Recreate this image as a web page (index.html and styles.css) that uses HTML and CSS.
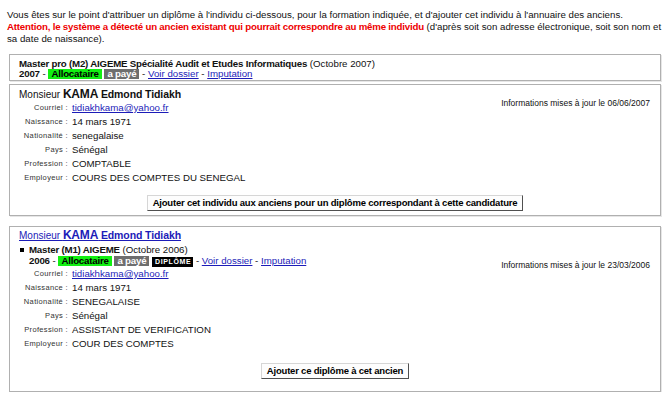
FILE: index.html
```html
<!DOCTYPE html>
<html lang="fr">
<head>
<meta charset="utf-8">
<link rel="stylesheet" href="styles.css">
</head>
<body>
<p class="intro">Vous êtes sur le point d'attribuer un diplôme à l'individu ci-dessous, pour la formation indiquée, et d'ajouter cet individu à l'annuaire des anciens.<br><strong class="warn">Attention, le système a détecté un ancien existant qui pourrait correspondre au même individu</strong> (d'après soit son adresse électronique, soit son nom et sa date de naissance).</p>

<div class="box head">
  <div class="title"><b>Master pro (M2) AIGEME Spécialité Audit et Etudes Informatiques</b> (Octobre 2007)</div>
  <div class="meta"><b>2007</b> - <span class="badge alloc">Allocataire</span> <span class="badge paye">a payé</span> - <a href="#">Voir dossier</a> - <a href="#">Imputation</a></div>
</div>

<div class="box person first">
  <div class="name">Monsieur <b class="big">KAMA</b> <b>Edmond Tidiakh</b></div>
  <div class="cols">
    <dl class="info">
      <dt>Courriel :</dt><dd><a href="#">tidiakhkama@yahoo.fr</a></dd>
      <dt>Naissance :</dt><dd>14 mars 1971</dd>
      <dt>Nationalité :</dt><dd>senegalaise</dd>
      <dt>Pays :</dt><dd>Sénégal</dd>
      <dt>Profession :</dt><dd>COMPTABLE</dd>
      <dt>Employeur :</dt><dd>COURS DES COMPTES DU SENEGAL</dd>
    </dl>
    <div class="upd">Informations mises à jour le 06/06/2007</div>
  </div>
  <div class="act"><button class="btn">Ajouter cet individu aux anciens pour un diplôme correspondant à cette candidature</button></div>
</div>

<div class="box person second">
  <div class="name"><a href="#" class="plink">Monsieur <b class="big">KAMA</b> <b>Edmond Tidiakh</b></a></div>
  <ul class="dips">
    <li><b>Master (M1) AIGEME</b> (Octobre 2006)
      <div class="meta"><b>2006</b> - <span class="badge alloc">Allocataire</span> <span class="badge paye">a payé</span> <span class="badge dip">DIPLÔME</span> - <a href="#">Voir dossier</a> - <a href="#">Imputation</a></div>
    </li>
  </ul>
  <div class="cols">
    <dl class="info">
      <dt>Courriel :</dt><dd><a href="#">tidiakhkama@yahoo.fr</a></dd>
      <dt>Naissance :</dt><dd>14 mars 1971</dd>
      <dt>Nationalité :</dt><dd>SENEGALAISE</dd>
      <dt>Pays :</dt><dd>Sénégal</dd>
      <dt>Profession :</dt><dd>ASSISTANT DE VERIFICATION</dd>
      <dt>Employeur :</dt><dd>COUR DES COMPTES</dd>
    </dl>
    <div class="upd">Informations mises à jour le 23/03/2006</div>
  </div>
  <div class="act"><button class="btn">Ajouter ce diplôme à cet ancien</button></div>
</div>
</body>
</html>
```
FILE: styles.css
```css
html, body { background: #fff; }
body {
  margin: 0;
  padding: 9px 0 0 7px;
  font-family: "Liberation Sans", Arial, sans-serif;
  font-size: 9.7px;
  color: #111;
}
a { color: #1c1cb8; text-decoration: underline; }
b, strong { font-weight: bold; letter-spacing: -0.2px; }
.intro { margin: 0 0 9px 0; line-height: 12px; width: 656px; }
.warn { color: #e00; }
.box {
  box-sizing: border-box;
  width: 652px;
  margin-left: 2px;
  border: 1px solid #b0b0b0;
  box-shadow: 1px 1px 0 #e6e6e6;
  background: #fff;
}
.head { padding: 4px 9px 1px 9px; line-height: 10px; }
.meta { line-height: 10px; }
.badge {
  display: inline-block;
  padding: 0 3px;
  font-weight: bold;
  letter-spacing: -0.2px;
  line-height: 10px;
}
.alloc { background: #12f012; color: #000; }
.paye { background: #6e6e6e; color: #fff; }
.dip {
  background: #000;
  color: #fff;
  font-size: 7px;
  letter-spacing: 0.6px;
  padding: 0 2px 0 3px;
}
.person { padding: 3px 9px 4px 9px; }
.first { margin-top: 3px; }
.second { margin-top: 10px; padding-top: 2px; padding-bottom: 12px; }
.name { line-height: 12px; font-size: 10px; }
.name b { font-size: 10.5px; letter-spacing: -0.1px; }
.name .big { font-size: 12px; letter-spacing: -0.2px; }
.cols { display: flex; justify-content: space-between; align-items: flex-start; }
.info {
  display: grid;
  grid-template-columns: 49px auto;
  column-gap: 4px;
  margin: 0;
}
.info dt {
  text-align: right;
  font-size: 7.5px;
  color: #333;
  line-height: 14px;
  letter-spacing: 0.35px;
}
.info dd { margin: 0; line-height: 14px; }
.upd { font-size: 8.5px; line-height: 10px; margin: -3px 1px 0 0; }
.second .upd { margin-top: -7px; }
.act { text-align: center; padding-top: 10px; line-height: 0; }
.second .act { padding-top: 12px; }
.btn {
  font-family: "Liberation Sans", Arial, sans-serif;
  font-weight: bold;
  font-size: 9.5px;
  letter-spacing: -0.2px;
  background: #fdfdfd;
  color: #000;
  border: 1px solid #d6d6d6;
  border-right-color: #505050;
  border-bottom-color: #505050;
  padding: 1px 5px;
  line-height: 12px;
  height: 16px;
  margin: 0;
}
.dips { margin: 2px 0 0 0; padding: 0 0 0 10px; list-style: none; }
.dips li { position: relative; line-height: 12px; }
.dips li::before {
  content: "";
  position: absolute;
  left: -9px;
  top: 4px;
  width: 4px;
  height: 4px;
  background: #000;
}
```
